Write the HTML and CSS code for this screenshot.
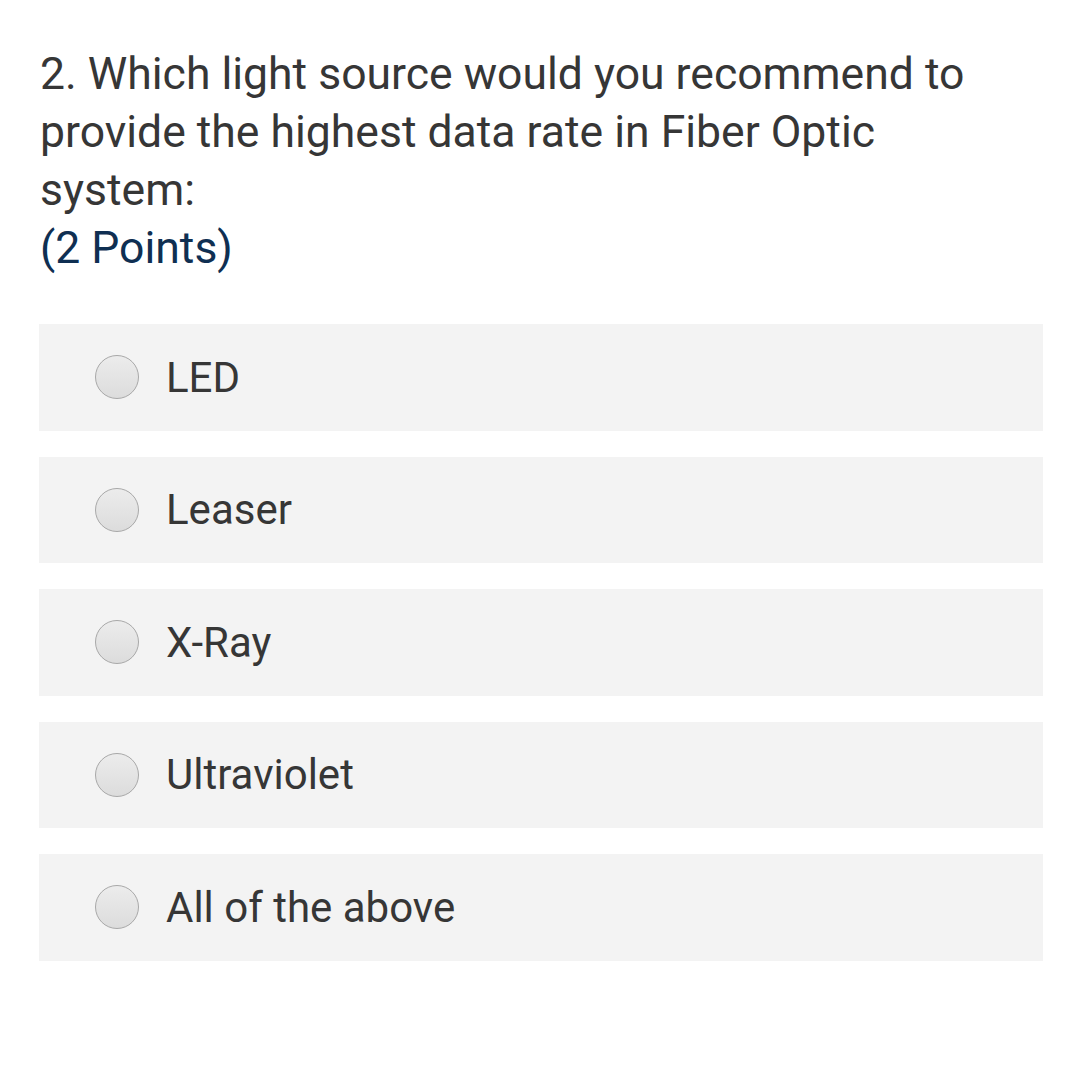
FILE: index.html
```html
<!DOCTYPE html>
<html>
<head>
<meta charset="utf-8">
<link rel="stylesheet" href="styles.css">
</head>
<body>
<div class="page">
  <div class="question">
    <div class="title">2. Which light source would you recommend to provide the highest data rate in Fiber Optic system:</div>
    <div class="points">(2 Points)</div>
  </div>
  <div class="options">
    <div class="option"><span class="radio"></span><span class="label">LED</span></div>
    <div class="option"><span class="radio"></span><span class="label">Leaser</span></div>
    <div class="option"><span class="radio"></span><span class="label">X-Ray</span></div>
    <div class="option"><span class="radio"></span><span class="label">Ultraviolet</span></div>
    <div class="option"><span class="radio"></span><span class="label">All of the above</span></div>
  </div>
</div>
</body>
</html>
```
FILE: styles.css
```css
html, body {
  margin: 0;
  padding: 0;
  background: #ffffff;
}
.page {
  padding: 45px 37px 0 39px;
  font-family: Roboto, "Noto Sans", sans-serif;
}
.question {
  padding-left: 1px;
  font-size: 44.5px;
  line-height: 58px;
  color: #363636;
}
.title {
  width: 960px;
}
.points {
  color: #0f2f52;
}
.options {
  margin-top: 47px;
  display: flex;
  flex-direction: column;
  gap: 25.75px;
}
.option {
  height: 106.75px;
  background: #f3f3f3;
  display: flex;
  align-items: center;
  padding-left: 56px;
}
.radio {
  width: 42px;
  height: 42px;
  border-radius: 50%;
  border: 1px solid #a8a8a8;
  background: linear-gradient(#ececec, #dcdcdc);
  flex: none;
}
.label {
  margin-left: 27px;
  font-size: 42px;
  color: #363636;
}
```
